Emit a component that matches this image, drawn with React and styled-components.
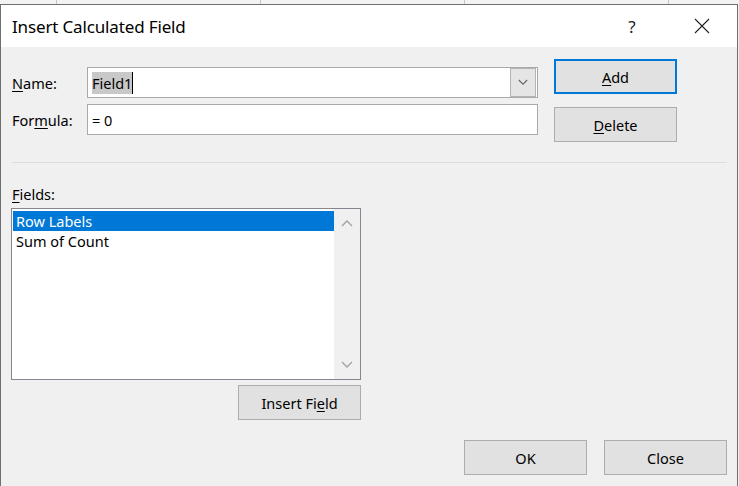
import React from 'react'
import styled, { createGlobalStyle } from 'styled-components'

const GlobalStyle = createGlobalStyle`
  html, body {
    margin: 0;
    padding: 0;
    background: #f0f0f0;
  }
  body {
    font-family: 'Noto Sans', 'Open Sans', sans-serif;
    color: #000;
  }
`

const Page = styled.div`
  width: 739px;
  height: 486px;
  display: flex;
  flex-direction: column;
  overflow: hidden;
`

const SheetStrip = styled.div`
  height: 4px;
  flex: none;
  background-color: #f3f3f3;
  background-image: repeating-linear-gradient(
    to right,
    transparent 0,
    transparent 56px,
    #c8c8c8 56px,
    #c8c8c8 57px,
    transparent 57px,
    transparent 204px
  );
`

const Dialog = styled.div`
  flex: 1;
  width: 736px;
  display: flex;
  flex-direction: column;
  border: 1px solid #6f6f6f;
  border-bottom: none;
  background: #f0f0f0;
`

const TitleBar = styled.div`
  height: 42px;
  flex: none;
  background: #fff;
  display: flex;
  align-items: center;
  padding-left: 11px;
`

const Title = styled.div`
  flex: 1;
  font-size: 17px;
  letter-spacing: -0.15px;
`

const TitleButton = styled.div`
  width: 70px;
  height: 42px;
  display: flex;
  align-items: center;
  justify-content: center;
  font-size: 17px;
  color: #222;
`

const Body = styled.div`
  flex: 1;
  padding: 12px 10px 0 10px;
  display: flex;
  flex-direction: column;
`

const TopSection = styled.div`
  display: flex;
`

const Form = styled.div`
  margin-top: 8px;
  display: flex;
  flex-direction: column;
  gap: 6px;
`

const FormRow = styled.div`
  display: flex;
  align-items: center;
`

const Label = styled.label`
  width: 75px;
  padding-left: 1px;
  font-size: 14.5px;
`

const Key = styled.span`
  text-decoration: underline;
  text-underline-offset: 2px;
`

const TextBox = styled.div`
  width: 445px;
  height: 29px;
  border: 1px solid #a9a9a9;
  background: #fff;
  display: flex;
  align-items: center;
  padding-left: 4px;
  font-size: 14.5px;
`

const Selected = styled.span`
  background: #c8c8c8;
  padding: 1px 0;
  border-right: 1px solid #000;
`

const ComboValue = styled.div`
  flex: 1;
  display: flex;
  align-items: center;
`

const DropButton = styled.div`
  width: 24px;
  height: 27px;
  margin-right: 1px;
  border: 1px solid #b4b4b4;
  background: #e5e5e5;
  display: flex;
  align-items: center;
  justify-content: center;
`

const ButtonColumn = styled.div`
  margin-left: 16px;
  display: flex;
  flex-direction: column;
  gap: 13px;
`

const Button = styled.div`
  width: ${p => (p.$primary ? '119px' : '121px')};
  height: ${p => (p.$primary ? '31px' : '33px')};
  border: ${p => (p.$primary ? '2px solid #0078d7' : '1px solid #adadad')};
  background: #e1e1e1;
  display: flex;
  align-items: center;
  justify-content: center;
  font-size: 14.5px;
`

const Separator = styled.div`
  margin: 20px 0 0 1px;
  height: 1px;
  width: 715px;
  background: #dcdcdc;
`

const FieldsSection = styled.div`
  margin-top: 21px;
  width: 350px;
  display: flex;
  flex-direction: column;
`

const FieldsLabel = styled.div`
  padding-left: 1px;
  font-size: 14.5px;
  height: 24px;
`

const ListBox = styled.div`
  height: 170px;
  border: 1px solid #828790;
  background: #fff;
  display: flex;
`

const ListItems = styled.div`
  flex: 1;
  padding: 2px 0 0 1px;
`

const ListItem = styled.div`
  height: 20px;
  line-height: 20px;
  padding-left: 3px;
  font-size: 14.5px;
  background: ${p => (p.$active ? '#0078d7' : 'transparent')};
  color: ${p => (p.$active ? '#fff' : '#000')};
`

const ScrollBar = styled.div`
  width: 26px;
  background: #f0f0f0;
  display: flex;
  flex-direction: column;
  justify-content: space-between;
  align-items: center;
  padding: 10px 0;
`

const InsertRow = styled.div`
  margin-top: 5px;
  display: flex;
  justify-content: flex-end;
`

const Footer = styled.div`
  margin-top: 20px;
  display: flex;
  justify-content: flex-end;
  gap: 17px;
`

const Chevron = ({ up, color = '#a0a0a0', size = 12 }) => (
  <svg width={size} height={size / 2 + 2} viewBox="0 0 12 8">
    <path
      d={up ? 'M1 7 L6 2 L11 7' : 'M1 1 L6 6 L11 1'}
      fill="none"
      stroke={color}
      strokeWidth="1.3"
    />
  </svg>
)

const CloseIcon = () => (
  <svg width="16" height="16" viewBox="0 0 16 16">
    <path d="M1 1 L15 15 M15 1 L1 15" stroke="#222" strokeWidth="1.1" />
  </svg>
)

export default function App() {
  return (
    <Page>
      <GlobalStyle />
      <SheetStrip />
      <Dialog>
        <TitleBar>
          <Title>Insert Calculated Field</Title>
          <TitleButton>?</TitleButton>
          <TitleButton>
            <CloseIcon />
          </TitleButton>
        </TitleBar>
        <Body>
          <TopSection>
            <Form>
              <FormRow>
                <Label>
                  <Key>N</Key>ame:
                </Label>
                <TextBox>
                  <ComboValue>
                    <Selected>Field1</Selected>
                  </ComboValue>
                  <DropButton>
                    <Chevron color="#666" size={10} />
                  </DropButton>
                </TextBox>
              </FormRow>
              <FormRow>
                <Label>
                  For<Key>m</Key>ula:
                </Label>
                <TextBox>= 0</TextBox>
              </FormRow>
            </Form>
            <ButtonColumn>
              <Button $primary>
                <span>
                  <Key>A</Key>dd
                </span>
              </Button>
              <Button>
                <span>
                  <Key>D</Key>elete
                </span>
              </Button>
            </ButtonColumn>
          </TopSection>
          <Separator />
          <FieldsSection>
            <FieldsLabel>
              <Key>F</Key>ields:
            </FieldsLabel>
            <ListBox>
              <ListItems>
                <ListItem $active>Row Labels</ListItem>
                <ListItem>Sum of Count</ListItem>
              </ListItems>
              <ScrollBar>
                <Chevron up />
                <Chevron />
              </ScrollBar>
            </ListBox>
            <InsertRow>
              <Button>
                <span>
                  Insert Fi<Key>e</Key>ld
                </span>
              </Button>
            </InsertRow>
          </FieldsSection>
          <Footer>
            <Button>OK</Button>
            <Button>Close</Button>
          </Footer>
        </Body>
      </Dialog>
    </Page>
  )
}
